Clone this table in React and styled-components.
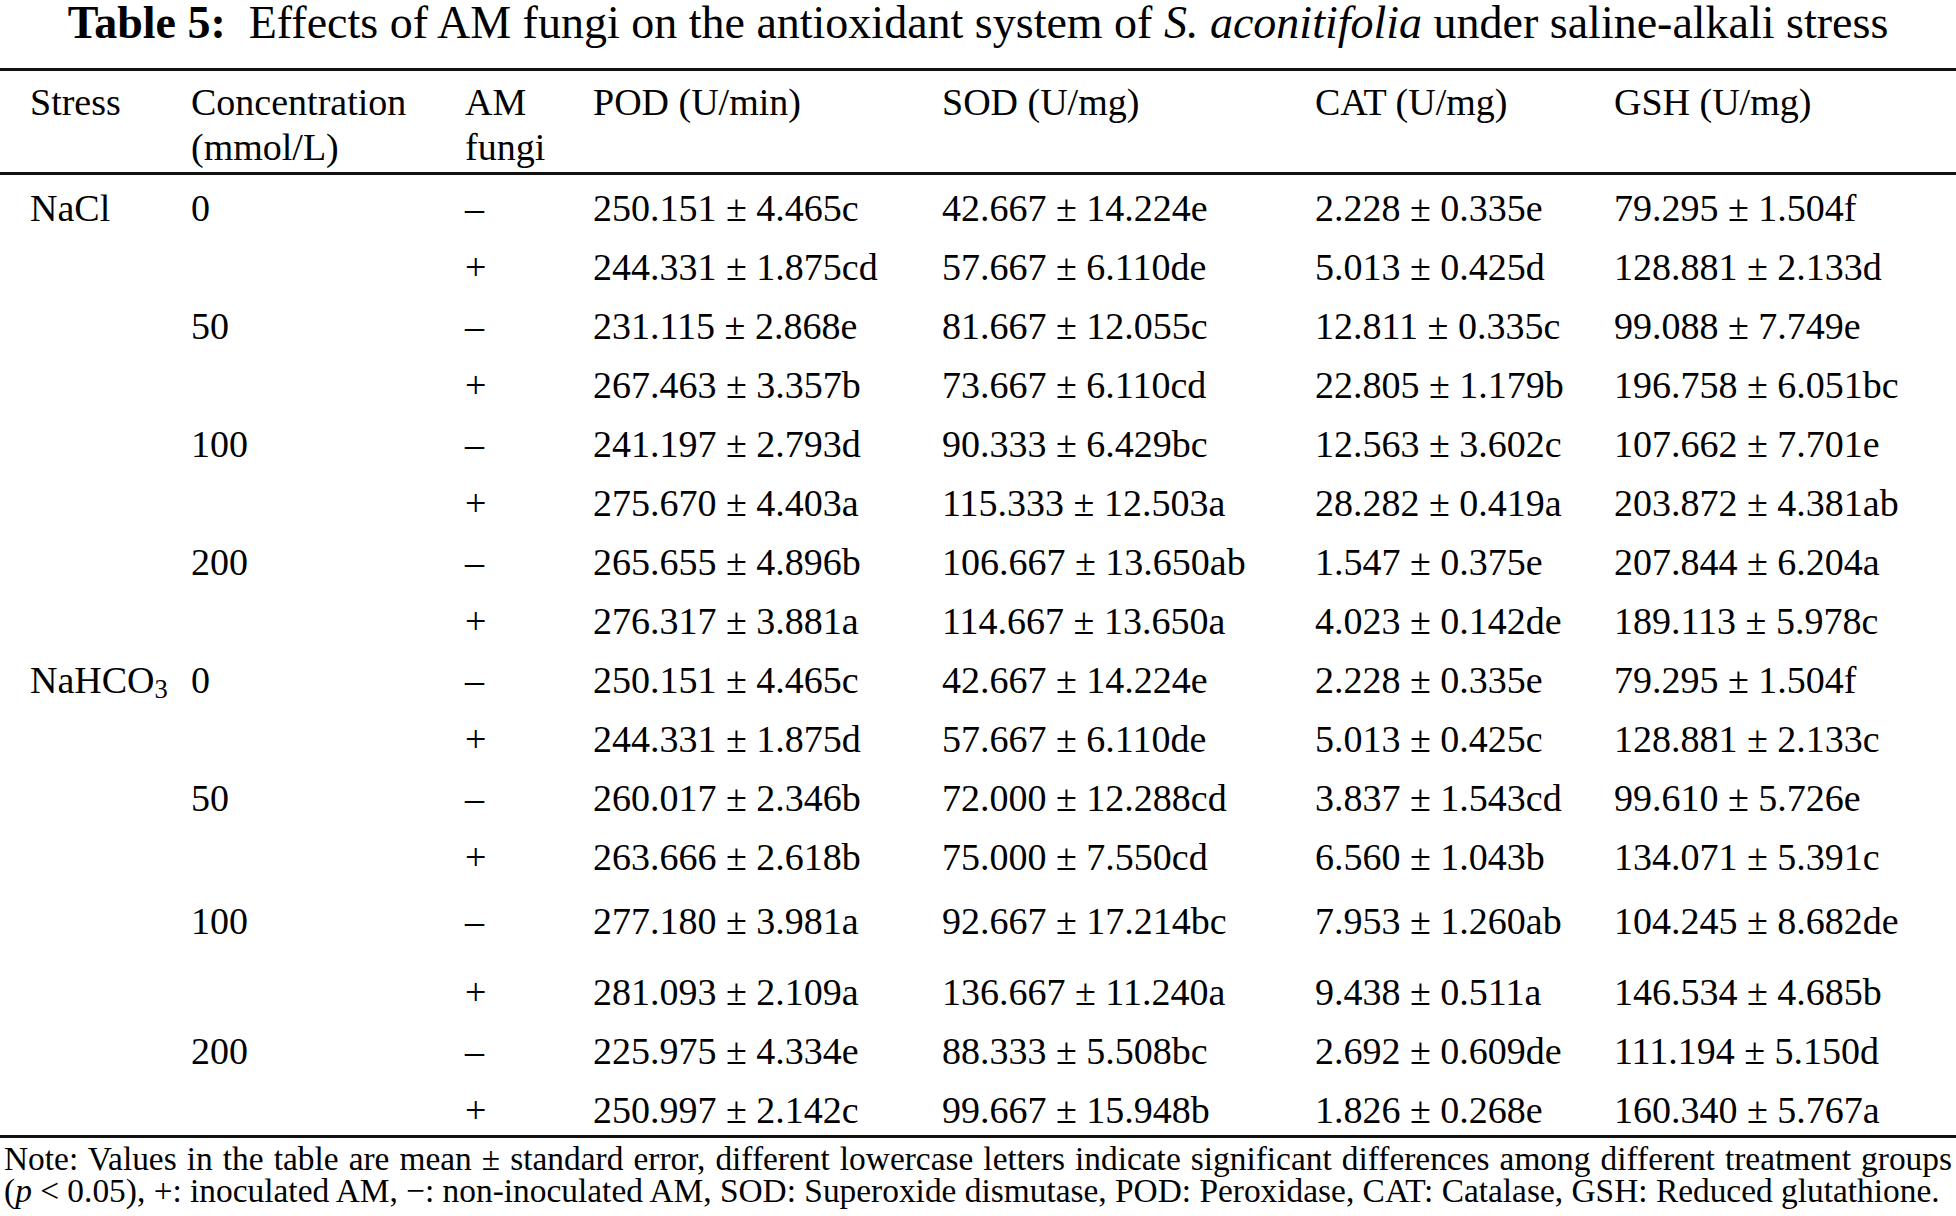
import styled, { createGlobalStyle } from 'styled-components'

const GlobalStyle = createGlobalStyle`
  body {
    margin: 0;
    background: #fff;
    color: #000;
    font-family: 'Liberation Serif', 'Times New Roman', serif;
  }
`

const Page = styled.div`
  width: 1956px;
  height: 1216px;
  overflow: hidden;
`

const Caption = styled.h1`
  margin: 0;
  height: 68px;
  font-size: 46px;
  font-weight: normal;
  line-height: 46px;
  text-align: center;
  white-space: nowrap;

  b {
    font-weight: bold;
  }
`

const Head = styled.div`
  display: grid;
  grid-template-columns: 161px 274px 128px 349px 373px 299px 1fr;
  padding: 9px 0 0 30px;
  height: 92px;
  border-top: 3px solid #111;
  border-bottom: 3px solid #111;
  font-size: 38px;
  line-height: 45px;
`

const Body = styled.div`
  padding-top: 4px;
  border-bottom: 3px solid #111;
`

const Row = styled.div`
  display: grid;
  grid-template-columns: 161px 274px 128px 349px 373px 299px 1fr;
  padding-left: 30px;
  height: ${(p) => p.$h || 59}px;
  margin-top: ${(p) => p.$extra || 0}px;
  font-size: 38px;
  line-height: 59px;
  white-space: nowrap;
`

const Note = styled.p`
  margin: 0;
  padding: 5px 4px 0 4px;
  font-size: 33.4px;
  line-height: 32px;
  text-align: justify;
  text-align-last: left;

  i {
    font-style: italic;
  }
`

const Keep = styled.span`
  white-space: nowrap;
`

const rows = [
  ['NaCl', '0', '–', '250.151 ± 4.465c', '42.667 ± 14.224e', '2.228 ± 0.335e', '79.295 ± 1.504f'],
  ['', '', '+', '244.331 ± 1.875cd', '57.667 ± 6.110de', '5.013 ± 0.425d', '128.881 ± 2.133d'],
  ['', '50', '–', '231.115 ± 2.868e', '81.667 ± 12.055c', '12.811 ± 0.335c', '99.088 ± 7.749e'],
  ['', '', '+', '267.463 ± 3.357b', '73.667 ± 6.110cd', '22.805 ± 1.179b', '196.758 ± 6.051bc'],
  ['', '100', '–', '241.197 ± 2.793d', '90.333 ± 6.429bc', '12.563 ± 3.602c', '107.662 ± 7.701e'],
  ['', '', '+', '275.670 ± 4.403a', '115.333 ± 12.503a', '28.282 ± 0.419a', '203.872 ± 4.381ab'],
  ['', '200', '–', '265.655 ± 4.896b', '106.667 ± 13.650ab', '1.547 ± 0.375e', '207.844 ± 6.204a'],
  ['', '', '+', '276.317 ± 3.881a', '114.667 ± 13.650a', '4.023 ± 0.142de', '189.113 ± 5.978c'],
  ['NaHCO3', '0', '–', '250.151 ± 4.465c', '42.667 ± 14.224e', '2.228 ± 0.335e', '79.295 ± 1.504f'],
  ['', '', '+', '244.331 ± 1.875d', '57.667 ± 6.110de', '5.013 ± 0.425c', '128.881 ± 2.133c'],
  ['', '50', '–', '260.017 ± 2.346b', '72.000 ± 12.288cd', '3.837 ± 1.543cd', '99.610 ± 5.726e'],
  ['', '', '+', '263.666 ± 2.618b', '75.000 ± 7.550cd', '6.560 ± 1.043b', '134.071 ± 5.391c'],
  ['', '100', '–', '277.180 ± 3.981a', '92.667 ± 17.214bc', '7.953 ± 1.260ab', '104.245 ± 8.682de'],
  ['', '', '+', '281.093 ± 2.109a', '136.667 ± 11.240a', '9.438 ± 0.511a', '146.534 ± 4.685b'],
  ['', '200', '–', '225.975 ± 4.334e', '88.333 ± 5.508bc', '2.692 ± 0.609de', '111.194 ± 5.150d'],
  ['', '', '+', '250.997 ± 2.142c', '99.667 ± 15.948b', '1.826 ± 0.268e', '160.340 ± 5.767a'],
]

// uneven spacing around the NaHCO3 100 mmol/L rows, as in the source
const extra = { 12: 5, 13: 12 }

const Sub = styled.sub`
  font-size: 0.7em;
  vertical-align: -0.2em;
`

const Stress = ({ name }) =>
  name === 'NaHCO3' ? (
    <span>
      NaHCO<Sub>3</Sub>
    </span>
  ) : (
    <span>{name}</span>
  )

const App = () => {
  return (
    <Page>
      <GlobalStyle />
      <Caption>
        <b>Table 5:</b>&nbsp; Effects of AM fungi on the antioxidant system of <i>S. aconitifolia</i> under
        saline-alkali stress
      </Caption>
      <Head>
        <div>Stress</div>
        <div>
          Concentration
          <br />
          (mmol/L)
        </div>
        <div>
          AM
          <br />
          fungi
        </div>
        <div>POD (U/min)</div>
        <div>SOD (U/mg)</div>
        <div>CAT (U/mg)</div>
        <div>GSH (U/mg)</div>
      </Head>
      <Body>
        {rows.map((r, i) => (
          <Row key={i} $extra={extra[i]} $h={i === rows.length - 1 ? 54 : 59}>
            <div>
              <Stress name={r[0]} />
            </div>
            {r.slice(1).map((c, j) => (
              <div key={j}>{c}</div>
            ))}
          </Row>
        ))}
      </Body>
      <Note>
        Note: Values in the table are mean ± standard error, different lowercase letters indicate significant
        differences among different treatment groups{' '}
        <Keep>
          (<i>p</i> &lt; 0.05),
        </Keep>{' '}
        +: inoculated AM, −: non-inoculated AM, SOD: Superoxide dismutase, POD: Peroxidase, CAT: Catalase, GSH:
        Reduced glutathione.
      </Note>
    </Page>
  )
}

export default App
